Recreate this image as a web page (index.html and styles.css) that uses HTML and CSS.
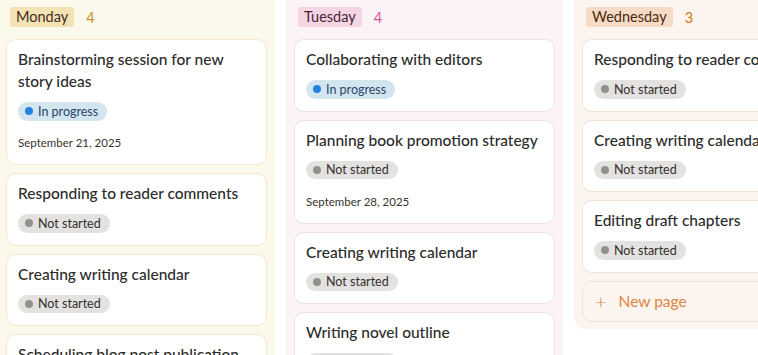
FILE: index.html
```html
<!DOCTYPE html>
<html lang="en">
<head>
    <meta charset="UTF-8">
    <meta name="viewport" content="width=device-width, initial-scale=1.0">
    <title>Writing board</title>
    <link rel="stylesheet" href="styles.css">
</head>
<body>

    <div class="board">

        <!-- Monday -->
        <div class="column col-yellow">
            <div class="column-head">
                <span class="day-tag">Monday</span>
                <span class="day-count">4</span>
            </div>
            <div class="card">
                <div class="card-title">Brainstorming session for new story ideas</div>
                <span class="status status-progress"><i class="dot"></i>In progress</span>
                <div class="card-date">September 21, 2025</div>
            </div>
            <div class="card">
                <div class="card-title">Responding to reader comments</div>
                <span class="status status-todo"><i class="dot"></i>Not started</span>
            </div>
            <div class="card">
                <div class="card-title">Creating writing calendar</div>
                <span class="status status-todo"><i class="dot"></i>Not started</span>
            </div>
            <div class="card">
                <div class="card-title">Scheduling blog post publication</div>
                <span class="status status-todo"><i class="dot"></i>Not started</span>
            </div>
        </div>

        <!-- Tuesday -->
        <div class="column col-pink">
            <div class="column-head">
                <span class="day-tag">Tuesday</span>
                <span class="day-count">4</span>
            </div>
            <div class="card">
                <div class="card-title">Collaborating with editors</div>
                <span class="status status-progress"><i class="dot"></i>In progress</span>
            </div>
            <div class="card">
                <div class="card-title">Planning book promotion strategy</div>
                <span class="status status-todo"><i class="dot"></i>Not started</span>
                <div class="card-date">September 28, 2025</div>
            </div>
            <div class="card">
                <div class="card-title">Creating writing calendar</div>
                <span class="status status-todo"><i class="dot"></i>Not started</span>
            </div>
            <div class="card">
                <div class="card-title">Writing novel outline</div>
                <span class="status status-todo"><i class="dot"></i>Not started</span>
            </div>
        </div>

        <!-- Wednesday -->
        <div class="column col-orange">
            <div class="column-head">
                <span class="day-tag">Wednesday</span>
                <span class="day-count">3</span>
            </div>
            <div class="card">
                <div class="card-title">Responding to reader comments</div>
                <span class="status status-todo"><i class="dot"></i>Not started</span>
            </div>
            <div class="card">
                <div class="card-title">Creating writing calendar</div>
                <span class="status status-todo"><i class="dot"></i>Not started</span>
            </div>
            <div class="card">
                <div class="card-title">Editing draft chapters</div>
                <span class="status status-todo"><i class="dot"></i>Not started</span>
            </div>
            <div class="new-page"><span class="plus">+</span>New page</div>
        </div>

    </div>

</body>
</html>
```

FILE: styles.css
```css
* {margin: 0; padding: 0; box-sizing: border-box;}

body {
    background: #fff;
    font-family: Lato, "Liberation Sans", sans-serif;
    color: #2c2c2b;
    overflow: hidden;
}

.board {
    display: flex;
    align-items: flex-start;
    gap: 11px;
    margin: -12px 0 0 -2px;
}

.column {
    flex: 0 0 277px;
    padding: 19px 8px 7px;
    border-radius: 12px;
    display: flex;
    flex-direction: column;
    gap: 8px;
}

.column-head {
    display: flex;
    align-items: center;
    height: 20px;
    padding-left: 4px;
    margin-bottom: 4px;
}

.day-tag {
    height: 20px;
    line-height: 20px;
    padding: 0 6px;
    border-radius: 3px;
    font-size: 14.5px;
}

.day-count {
    margin-left: 12px;
    font-size: 14.5px;
}

.card {
    background: #fff;
    border: 1px solid;
    border-radius: 10px;
    padding: 8px 11px 12px;
}

.card-title {
    font-size: 15.5px;
    font-weight: 500;
    line-height: 22px;
    color: #2c2c2b;
    margin-bottom: 10px;
}

.status {
    display: flex;
    align-items: center;
    width: fit-content;
    height: 18.5px;
    padding: 0 9px 0 7px;
    border-radius: 10px;
    font-size: 12.5px;
}

.status .dot {
    width: 8px;
    height: 8px;
    border-radius: 50%;
    margin-right: 5px;
}

.status-progress { background: #d3e5ef; color: #28456c; }
.status-progress .dot { background: #2383e2; }

.status-todo { background: #e3e2e0; color: #32302c; }
.status-todo .dot { background: #91918e; }

.card-date {
    margin-top: 12.5px;
    font-size: 11.5px;
    line-height: 19px;
    color: #37352f;
}

.new-page {
    display: flex;
    align-items: center;
    height: 41px;
    padding-left: 12px;
    border: 1px solid;
    border-radius: 10px;
    font-size: 15.5px;
}

.new-page .plus {
    font-size: 20px;
    font-weight: 300;
    margin-right: 12px;
}

/* column colours */
.col-yellow { background: #fbf8ec; }
.col-yellow .card { border-color: #f3e9cb; }
.col-yellow .day-tag { background: #f3e2b3; color: #402c1b; }
.col-yellow .day-count { color: #cb912f; }

.col-pink { background: #fbf3f6; }
.col-pink .card { border-color: #f5dce6; }
.col-pink .day-tag { background: #f3d5e3; color: #4c2337; }
.col-pink .day-count { color: #d15796; }

.col-orange { background: #fbf4ef; }
.col-orange .card, .col-orange .new-page { border-color: #f6e1d1; }
.col-orange .day-tag { background: #f6dcc7; color: #49290e; }
.col-orange .day-count { color: #d9730d; }
.col-orange .new-page { color: #df8443; }
```
